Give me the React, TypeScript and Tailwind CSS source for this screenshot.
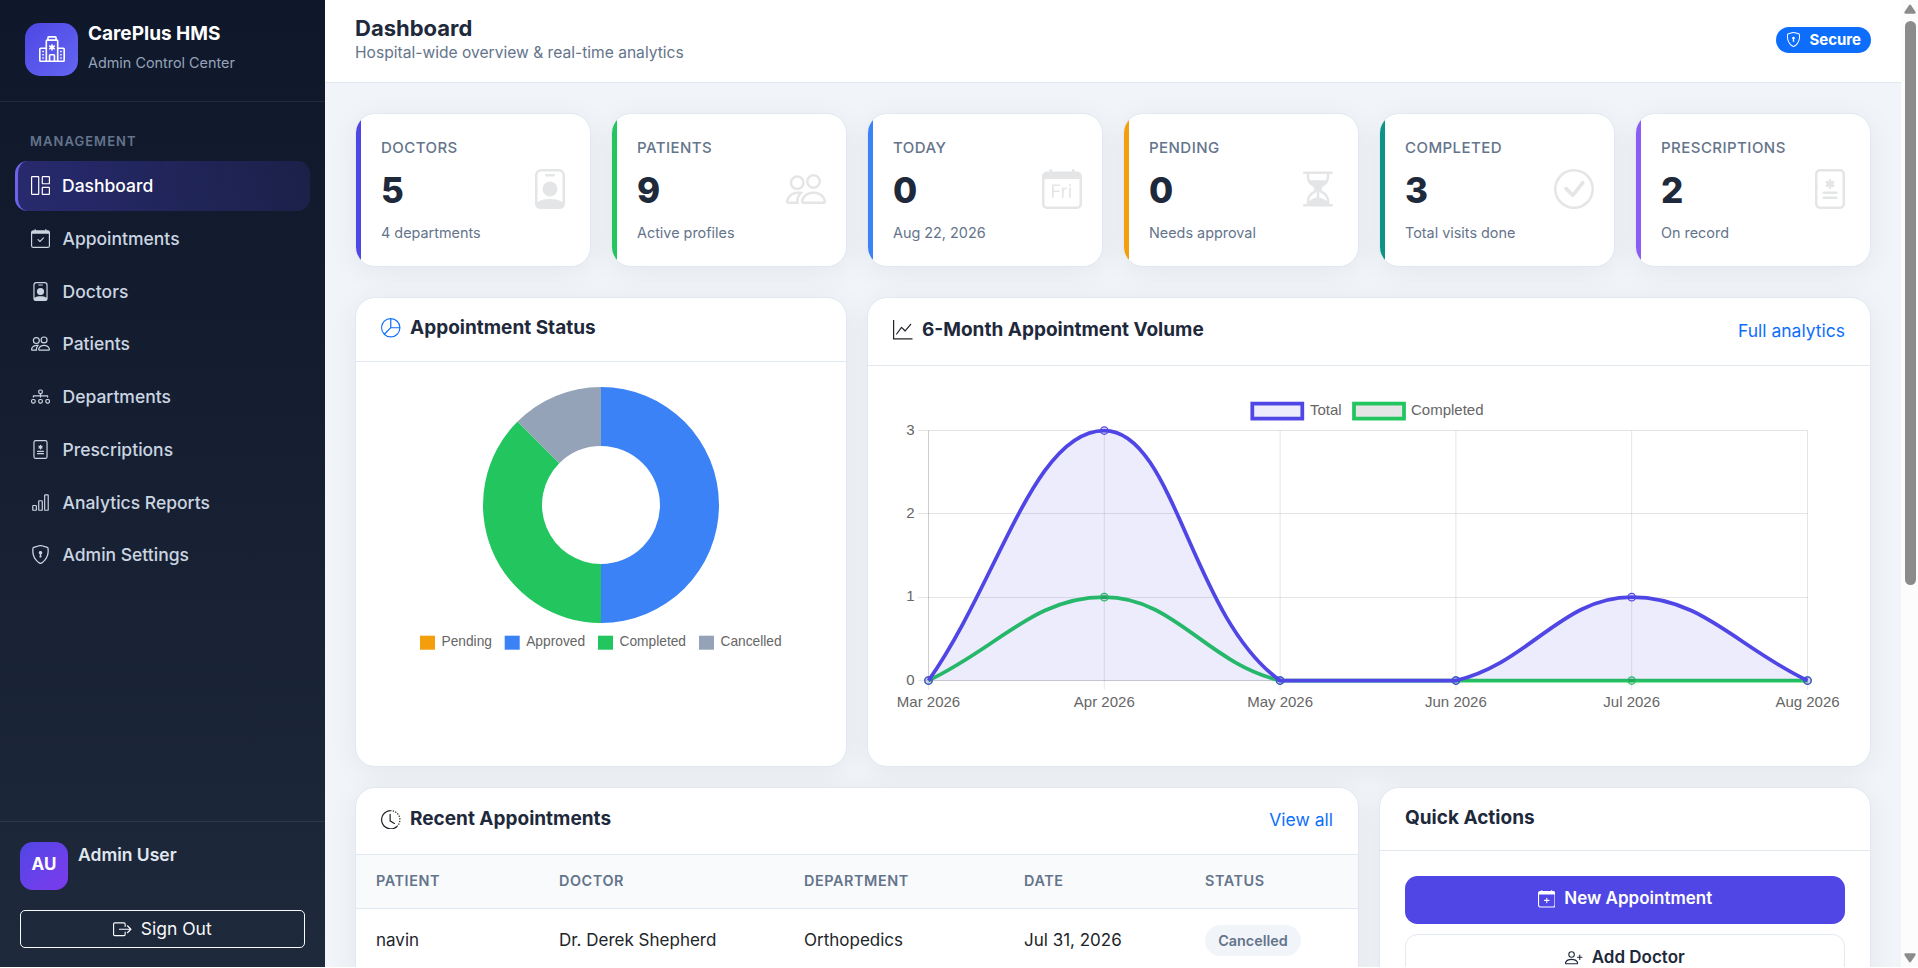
import type { ReactNode } from "react";
import type { IconType } from "react-icons";
import {
  BsBarChart,
  BsBoxArrowRight,
  BsCalendarCheck,
  BsCalendarDay,
  BsCalendarPlus,
  BsCheckCircle,
  BsClockHistory,
  BsDiagram3,
  BsFileMedical,
  BsGraphUp,
  BsGrid1X2,
  BsHospital,
  BsHourglassSplit,
  BsPeople,
  BsPersonBadge,
  BsPersonPlus,
  BsPieChart,
  BsShieldLock,
} from "react-icons/bs";

const NAV: { label: string; icon: IconType; active?: boolean }[] = [
  { label: "Dashboard", icon: BsGrid1X2, active: true },
  { label: "Appointments", icon: BsCalendarCheck },
  { label: "Doctors", icon: BsPersonBadge },
  { label: "Patients", icon: BsPeople },
  { label: "Departments", icon: BsDiagram3 },
  { label: "Prescriptions", icon: BsFileMedical },
  { label: "Analytics Reports", icon: BsBarChart },
  { label: "Admin Settings", icon: BsShieldLock },
];

const STATS: { label: string; value: number; note: string; icon: IconType; accent: string }[] = [
  { label: "DOCTORS", value: 5, note: "4 departments", icon: BsPersonBadge, accent: "bg-[#4f46e5]" },
  { label: "PATIENTS", value: 9, note: "Active profiles", icon: BsPeople, accent: "bg-[#22c55e]" },
  { label: "TODAY", value: 0, note: "Aug 22, 2026", icon: BsCalendarDay, accent: "bg-[#3b82f6]" },
  { label: "PENDING", value: 0, note: "Needs approval", icon: BsHourglassSplit, accent: "bg-[#f59e0b]" },
  { label: "COMPLETED", value: 3, note: "Total visits done", icon: BsCheckCircle, accent: "bg-[#0d9488]" },
  { label: "PRESCRIPTIONS", value: 2, note: "On record", icon: BsFileMedical, accent: "bg-[#8b5cf6]" },
];

const CHART_FONT = "'Liberation Sans', Arial, sans-serif";

function Sidebar() {
  return (
    <aside className="flex w-[325px] shrink-0 flex-col bg-gradient-to-b from-[#0f172a] to-[#1e293b]">
      <div className="flex h-[102px] items-center gap-[10px] border-b border-white/8 pb-[3px] pl-[25px]">
        <div className="flex size-[53px] items-center justify-center rounded-[15px] bg-gradient-to-br from-[#4f46e5] to-[#6366f1] pb-px text-white">
          <BsHospital size={26} />
        </div>
        <div>
          <p className="text-[19px] leading-[28px] font-bold text-white">CarePlus HMS</p>
          <p className="pb-[2px] text-[14.4px] leading-[29px] text-[#94a3b8]">Admin Control Center</p>
        </div>
      </div>

      <nav className="flex-1 px-[15px] pt-[29px]">
        <p className="mb-[10px] pl-[15px] text-[13px] leading-[20px] font-semibold tracking-[0.08em] text-[#64748b]">
          MANAGEMENT
        </p>
        {NAV.map(({ label, icon: Icon, active }) => (
          <a
            key={label}
            href="#"
            className={`mb-[2.5px] flex h-[50.25px] items-center rounded-[12.5px] text-[17.5px] font-medium ${
              active
                ? "gap-3 border-l-[3px] border-[#6d64ea] bg-gradient-to-r from-[#4f46e5]/35 to-[#4f46e5]/15 pb-px pl-[13px] text-white"
                : "gap-[12.5px] pl-4 text-[#cbd5e1]"
            }`}
          >
            <Icon size={19} className="mb-px" />
            {label}
          </a>
        ))}
      </nav>

      <div className="border-t border-white/8 p-5 pb-[19px]">
        <div className="mb-5 flex gap-[10px]">
          <div className="flex size-12 items-center justify-center rounded-[12.5px] bg-gradient-to-br from-[#4f46e5] to-[#7c3aed] pb-[2px] text-[17px] font-bold text-white">
            AU
          </div>
          <p className="text-[17.5px] leading-[26px] font-semibold text-[#e2e8f0]">Admin User</p>
        </div>
        <button className="flex h-[38px] w-full items-center justify-center gap-[9px] rounded-[5px] border border-[#f8f9fa] text-[17.5px] text-[#f8f9fa]">
          <BsBoxArrowRight size={18.5} />
          Sign Out
        </button>
      </div>
    </aside>
  );
}

function Card({ className = "", children }: { className?: string; children: ReactNode }) {
  return (
    <section
      className={`overflow-hidden rounded-[20px] border border-[#e2e8f0] bg-white shadow-[0_5px_30px_rgba(15,23,42,0.06)] ${className}`}
    >
      {children}
    </section>
  );
}

function StatCard({ label, value, note, icon: Icon, accent }: (typeof STATS)[number]) {
  return (
    <Card className="flex h-[154px]">
      <div className={`w-[5px] ${accent}`} />
      <div className="flex flex-1 items-center justify-between pr-5 pl-5">
        <div>
          <p className="mb-[10px] text-[15px] leading-[22px] font-medium tracking-[0.03em] text-[#64748b]">{label}</p>
          <p className="mb-[11px] text-[35px] leading-[42px] font-extrabold text-[#1e293b]">{value}</p>
          <p className="text-[14.4px] leading-[22px] text-[#64748b]">{note}</p>
        </div>
        <Icon size={40} className="mb-[2px] -ml-10 text-[#e4e5e6]" />
      </div>
    </Card>
  );
}

/* ---------- Doughnut ---------- */

const STATUS = [
  { label: "Pending", value: 0, color: "#f59e0b", x: 64 },
  { label: "Approved", value: 4, color: "#3b82f6", x: 148.7 },
  { label: "Completed", value: 3, color: "#22c55e", x: 242 },
  { label: "Cancelled", value: 1, color: "#94a3b8", x: 343 },
];

function slicePath(cx: number, cy: number, outer: number, inner: number, from: number, to: number) {
  const pt = (r: number, turn: number) => {
    const a = turn * Math.PI * 2 - Math.PI / 2;
    return `${(cx + r * Math.cos(a)).toFixed(2)} ${(cy + r * Math.sin(a)).toFixed(2)}`;
  };
  const large = to - from > 0.5 ? 1 : 0;
  return `M${pt(outer, from)} A${outer} ${outer} 0 ${large} 1 ${pt(outer, to)} L${pt(inner, to)} A${inner} ${inner} 0 ${large} 0 ${pt(inner, from)} Z`;
}

function StatusChart() {
  const total = STATUS.reduce((sum, s) => sum + s.value, 0);
  let start = 0;
  return (
    <svg className="block" width="490" height="404">
      {STATUS.map((s) => {
        if (!s.value) return null;
        const from = start;
        start += s.value / total;
        return <path key={s.label} d={slicePath(245, 143, 118, 59, from, start)} fill={s.color} />;
      })}
      <g fontFamily={CHART_FONT} fontSize="13.75" fill="#666">
        {STATUS.map((s) => (
          <g key={s.label}>
            <rect x={s.x} y="273.7" width="15" height="14" fill={s.color} />
            <text x={s.x + 21.5} y="284">{s.label}</text>
          </g>
        ))}
      </g>
    </svg>
  );
}

/* ---------- Line chart ---------- */

const MONTHS = ["Mar 2026", "Apr 2026", "May 2026", "Jun 2026", "Jul 2026", "Aug 2026"];
const TOTALS = [0, 3, 0, 0, 1, 0];
const COMPLETED = [0, 1, 0, 0, 0, 0];
const TENSION = 0.4;
const TOP = 64.5;
const BOTTOM = 314.5;

const xAt = (i: number) => 60.5 + i * 175.8;
const yAt = (v: number) => BOTTOM - (v * (BOTTOM - TOP)) / 3;
const clampY = (y: number) => Math.min(BOTTOM, Math.max(TOP, y));

// Cardinal-ish spline whose control points stay inside the plot area
function curve(values: number[]) {
  const pts = values.map((v, i) => ({ x: xAt(i), y: yAt(v) }));
  const ctrl = pts.map((p, i) => {
    const prev = pts[i - 1] ?? p;
    const next = pts[i + 1] ?? p;
    const d01 = Math.hypot(p.x - prev.x, p.y - prev.y);
    const d12 = Math.hypot(next.x - p.x, next.y - p.y);
    const fa = (TENSION * d01) / (d01 + d12);
    const fb = (TENSION * d12) / (d01 + d12);
    return {
      inX: p.x - fa * (next.x - prev.x),
      inY: clampY(p.y - fa * (next.y - prev.y)),
      outX: p.x + fb * (next.x - prev.x),
      outY: clampY(p.y + fb * (next.y - prev.y)),
    };
  });
  return pts.reduce((d, p, i) => {
    if (i === 0) return `M${p.x} ${p.y}`;
    const a = ctrl[i - 1];
    const b = ctrl[i];
    return `${d} C${a.outX} ${a.outY} ${b.inX} ${b.inY} ${p.x} ${p.y}`;
  }, "");
}

function Dots({ values, stroke, fill }: { values: number[]; stroke: string; fill: string }) {
  return (
    <g stroke={stroke} fill={fill} strokeWidth="1.25">
      {values.map((v, i) => (
        <circle key={i} cx={xAt(i)} cy={yAt(v)} r="3.75" />
      ))}
    </g>
  );
}

function VolumeChart() {
  return (
    <svg className="block" width="1002" height="400">
      <g stroke="#000" strokeOpacity="0.1">
        {[0, 1, 2, 3].map((v) => (
          <line key={v} x1="50" x2={xAt(5)} y1={Math.floor(yAt(v)) + 0.5} y2={Math.floor(yAt(v)) + 0.5} />
        ))}
        {MONTHS.map((m, i) => (
          <line key={m} x1={xAt(i)} x2={xAt(i)} y1={TOP} y2="323.5" />
        ))}
        <line x1={xAt(0)} x2={xAt(0)} y1={TOP} y2={BOTTOM} />
        <line x1={xAt(0)} x2={xAt(5)} y1={BOTTOM} y2={BOTTOM} />
      </g>

      <path d={curve(COMPLETED)} fill="none" stroke="#22c55e" strokeWidth="3.75" />
      <Dots values={COMPLETED} stroke="#22c55e" fill="rgba(0,0,0,0.1)" />
      <path d={`${curve(TOTALS)} Z`} fill="#4f46e5" fillOpacity="0.1" />
      <path d={curve(TOTALS)} fill="none" stroke="#4f46e5" strokeWidth="3.75" />
      <Dots values={TOTALS} stroke="#4f46e5" fill="rgba(79,70,229,0.1)" />

      <g strokeWidth="3.75">
        <rect x="384.300" y="37.600" width="50" height="15" fill="rgba(79,70,229,0.1)" stroke="#4f46e5" />
        <rect x="486" y="37.600" width="50" height="15" fill="rgba(0,0,0,0.1)" stroke="#22c55e" />
      </g>
      <g fontFamily={CHART_FONT} fontSize="15" fill="#666">
        <text x="442" y="48.500">Total</text>
        <text x="543" y="48.500">Completed</text>
        {[0, 1, 2, 3].map((v) => (
          <text key={v} x="46.5" y={yAt(v) + 4.3} textAnchor="end">{v}</text>
        ))}
        {MONTHS.map((m, i) => (
          <text key={m} x={xAt(i)} y="340.700" textAnchor="middle">{m}</text>
        ))}
      </g>
    </svg>
  );
}

/* ---------- Panels ---------- */

function RecentAppointments() {
  return (
    <Card className="h-[420px] w-[1004px]">
      <div className="flex h-[67px] items-center justify-between border-b border-[#e2e8f0] px-[25px] pb-[3px]">
        <h2 className="flex items-center gap-[9.5px] text-[19px] font-bold text-[#1e293b]">
          <BsClockHistory size={19.5} className="text-[#212529]" />
          Recent Appointments
        </h2>
        <a href="#" className="pt-[2px] text-[17.5px] text-[#0d6efd]">View all</a>
      </div>
      <table className="w-full table-fixed text-left">
        <colgroup>
          <col className="w-[203px]" />
          <col className="w-[245px]" />
          <col className="w-[220px]" />
          <col className="w-[181px]" />
          <col />
        </colgroup>
        <thead>
          <tr className="h-[53px] border-b border-[#e2e8f0] bg-[#f8fafc] text-[14.4px] tracking-[0.04em] text-[#64748b]">
            <th className="pl-5 font-semibold">PATIENT</th>
            <th className="font-semibold">DOCTOR</th>
            <th className="font-semibold">DEPARTMENT</th>
            <th className="font-semibold">DATE</th>
            <th className="font-semibold">STATUS</th>
          </tr>
        </thead>
        <tbody>
          <tr className="h-[65px] border-b border-[#f1f5f9] text-[17px] text-[#212529]">
            <td className="pl-5">navin</td>
            <td>Dr. Derek Shepherd</td>
            <td>Orthopedics</td>
            <td>Jul 31, 2026</td>
            <td>
              <span className="flex h-[31px] w-24 items-center justify-center rounded-full bg-[#f1f5f9] text-[14.4px] font-semibold text-[#64748b]">
                Cancelled
              </span>
            </td>
          </tr>
        </tbody>
      </table>
    </Card>
  );
}

function QuickActions() {
  return (
    <Card className="h-[420px] w-[492px]">
      <h2 className="flex h-[63px] items-center border-b border-[#e2e8f0] px-[25px] pb-[2px] text-[19px] font-bold text-[#1e293b]">
        Quick Actions
      </h2>
      <div className="flex flex-col gap-[10px] p-[25px] text-[17px] font-semibold">
        <button className="flex h-12 items-center justify-center gap-[9px] rounded-[12.5px] bg-[#4f46e5] pb-[2px] text-white">
          <BsCalendarPlus size={17.5} />
          New Appointment
        </button>
        <button className="flex h-12 items-center justify-center gap-[9px] rounded-[12.5px] border border-[#e2e8f0] bg-white pb-px text-[#1e293b]">
          <BsPersonPlus size={17.5} />
          Add Doctor
        </button>
      </div>
    </Card>
  );
}

function Scrollbar() {
  return (
    <div className="flex w-[17px] shrink-0 flex-col items-center bg-[#fcfcfc] pt-1 pb-1 pl-px">
      <svg width="12" height="10" fill="#8b8b8b">
        <path d="M5 1.2Q6 0 7 1.2L11.6 8Q12 9.6 10.5 9.8H1.5Q0 9.6 .4 8Z" />
      </svg>
      <div className="mt-[7px] h-[564px] w-[11px] rounded-full bg-[#8b8b8b]" />
      <svg width="12" height="10" fill="#8b8b8b" className="mt-auto">
        <path d="M5 8.8Q6 10 7 8.8L11.6 2Q12 .4 10.5 .2H1.5Q0 .4 .4 2Z" />
      </svg>
    </div>
  );
}

export default function App() {
  return (
    <div className="flex h-[967px] overflow-hidden bg-[#f1f5f9] font-['Inter',sans-serif]">
      <Sidebar />
      <div className="flex min-w-0 flex-1 flex-col overflow-hidden">
        <header className="flex h-[83px] shrink-0 items-center justify-between border-b border-[#e2e8f0] bg-white px-[30px] pb-[3px]">
          <div>
            <h1 className="text-[22px] leading-[26px] font-bold text-[#1e293b]">Dashboard</h1>
            <p className="text-[15.6px] leading-[23px] text-[#64748b]">Hospital-wide overview &amp; real-time analytics</p>
          </div>
          <span className="flex h-[26px] items-center gap-2 rounded-full bg-[#0d6efd] px-[10px] text-[15px] font-bold text-white">
            <BsShieldLock size={15} />
            <span className="pt-px">Secure</span>
          </span>
        </header>

        <main className="flex flex-1 flex-col px-[30px] pt-[30px]">
          <div className="mb-[30px] grid grid-cols-6 gap-5">
            {STATS.map((s) => (
              <StatCard key={s.label} {...s} />
            ))}
          </div>

          <div className="mb-5 flex gap-5">
            <Card className="h-[470px] w-[492px]">
              <h2 className="flex h-[64px] items-center gap-[9.5px] border-b border-[#e2e8f0] px-[25px] pb-[3px] text-[19px] font-bold text-[#1e293b]">
                <BsPieChart size={19.5} className="text-[#0d6efd]" />
                Appointment Status
              </h2>
              <StatusChart />
            </Card>
            <Card className="h-[470px] w-[1004px]">
              <div className="flex h-[68px] items-center justify-between border-b border-[#e2e8f0] px-[25px] pb-[3px]">
                <h2 className="flex items-center gap-[9.5px] text-[19px] font-bold text-[#1e293b]">
                  <BsGraphUp size={19.5} className="text-[#212529]" />
                  6-Month Appointment Volume
                </h2>
                <a href="#" className="pt-[2px] text-[17.5px] text-[#0d6efd]">Full analytics</a>
              </div>
              <VolumeChart />
            </Card>
          </div>

          <div className="flex gap-5">
            <RecentAppointments />
            <QuickActions />
          </div>
        </main>
      </div>
      <Scrollbar />
    </div>
  );
}
